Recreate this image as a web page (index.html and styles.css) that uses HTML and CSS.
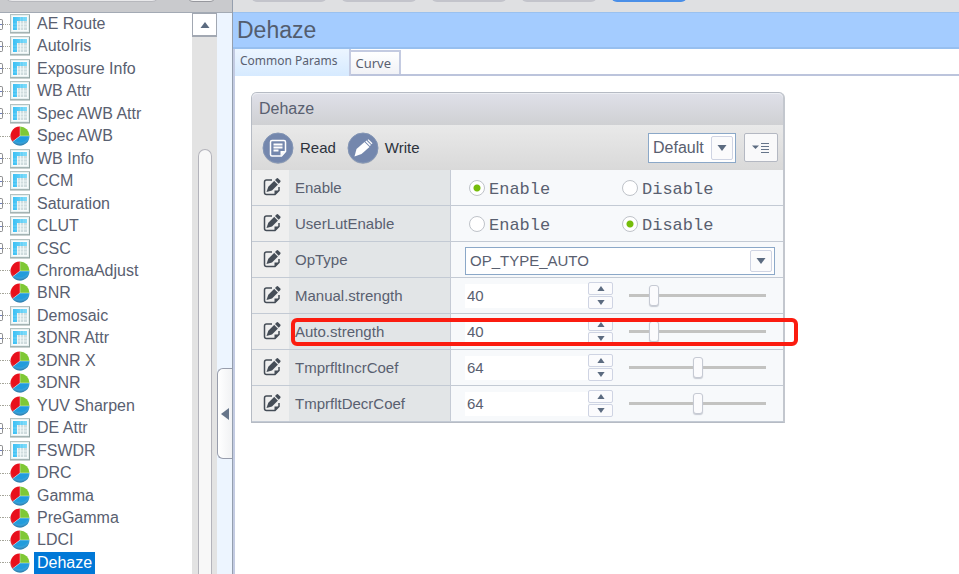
FILE: index.html
```html
<!DOCTYPE html>
<html lang="en">
<head>
<meta charset="utf-8">
<title>Dehaze</title>
<link rel="stylesheet" href="styles.css">
</head>
<body>
<svg class="defs" aria-hidden="true">
  <defs>
    <linearGradient id="blue" x1="0" y1="0" x2="1" y2="0"><stop offset="0" stop-color="#3cc0f4"/><stop offset="1" stop-color="#7fdcfa"/></linearGradient>
    <radialGradient id="shade" cx="0.5" cy="0.35" r="0.65"><stop offset="0.7" stop-color="#fff" stop-opacity="0"/><stop offset="1" stop-color="#223" stop-opacity="0.4"/></radialGradient>
    <symbol id="table" viewBox="0 0 20 20">
      <rect x="0.5" y="0.5" width="19" height="18" fill="#e6efef" stroke="#b3c2c1"/>
      <path d="M0 19h20M19.500 1v18" stroke="#93a5a4"/>
      <rect x="2" y="2" width="16" height="15" fill="#f8fcfc"/>
      <rect x="3" y="3" width="14" height="13" fill="#cfdcde"/>
      <path d="M3 3h14v4H7v9H3z" fill="url(#blue)"/>
      <path d="M7.500 7v9M10.500 7v9M13.500 7v9M7 10h10M7 13h10" stroke="#f4fafa" stroke-width="0.800" fill="none"/>
      <path d="M3 10h4M3 13h4M10.500 3v4M13.500 3v4" stroke="#8ddcf7" stroke-width="0.600"/>
    </symbol>
    <symbol id="pie" viewBox="0 0 20 20">
      <path d="M10 10V.5A9.500 9.500 0 0 0 2.500 15.800z" fill="#e8101c"/>
      <path d="M10 10V.5A9.500 9.500 0 0 1 19.500 10z" fill="#7fc835"/>
      <path d="M10 10h9.500A9.500 9.500 0 0 1 2.500 15.800z" fill="#219cdc"/>
      <path d="M10 .5V10h9.500M10 10l-7.500 5.800" stroke="#fff" stroke-opacity="0.4" fill="none"/>
      <circle cx="10" cy="10" r="9.500" fill="url(#shade)"/>
    </symbol>
    <symbol id="edit" viewBox="0 0 18 18">
      <path d="M9 2H3.500Q1.500 2 1.500 4v10.500q0 2 2 2H12l4-4V9" fill="none" stroke="#454d57" stroke-width="1.500"/>
      <path d="M11.500 17v-4.500H16z" fill="#454d57"/>
      <path d="M3.500 14l1.800-5.200 6-6 3.700 3.700-6 6z" fill="#454d57"/>
      <path d="M12 2l1.800-1.700q.7-.5 1.400.1l2.100 2.200q.6.700 0 1.300L15.700 5.700z" fill="#454d57"/>
      <path d="M11.200 2.400l4.400 4.400" stroke="#efefef" stroke-width="0.800"/>
    </symbol>
    <symbol id="up" viewBox="0 0 10 6"><path d="M5 0l4.500 6h-9z" fill="#5c6b80"/></symbol>
    <symbol id="down" viewBox="0 0 10 6"><path d="M.5 0h9L5 6z" fill="#5c6b80"/></symbol>
  </defs>
</svg>

<div class="app">
  <aside class="sidebar">
    <div class="side-top"><span class="side-field"></span><span class="side-button"></span></div>
    <div class="side-body">
      <ul class="tree">
        <li class="node branch"><svg><use href="#table"/></svg><span>AE Route</span></li>
        <li class="node branch"><svg><use href="#table"/></svg><span>AutoIris</span></li>
        <li class="node branch"><svg><use href="#table"/></svg><span>Exposure Info</span></li>
        <li class="node branch"><svg><use href="#table"/></svg><span>WB Attr</span></li>
        <li class="node branch"><svg><use href="#table"/></svg><span>Spec AWB Attr</span></li>
        <li class="node"><svg><use href="#pie"/></svg><span>Spec AWB</span></li>
        <li class="node branch"><svg><use href="#table"/></svg><span>WB Info</span></li>
        <li class="node branch"><svg><use href="#table"/></svg><span>CCM</span></li>
        <li class="node branch"><svg><use href="#table"/></svg><span>Saturation</span></li>
        <li class="node branch"><svg><use href="#table"/></svg><span>CLUT</span></li>
        <li class="node branch"><svg><use href="#table"/></svg><span>CSC</span></li>
        <li class="node"><svg><use href="#pie"/></svg><span>ChromaAdjust</span></li>
        <li class="node"><svg><use href="#pie"/></svg><span>BNR</span></li>
        <li class="node branch"><svg><use href="#table"/></svg><span>Demosaic</span></li>
        <li class="node branch"><svg><use href="#table"/></svg><span>3DNR Attr</span></li>
        <li class="node"><svg><use href="#pie"/></svg><span>3DNR X</span></li>
        <li class="node"><svg><use href="#pie"/></svg><span>3DNR</span></li>
        <li class="node"><svg><use href="#pie"/></svg><span>YUV Sharpen</span></li>
        <li class="node branch"><svg><use href="#table"/></svg><span>DE Attr</span></li>
        <li class="node branch"><svg><use href="#table"/></svg><span>FSWDR</span></li>
        <li class="node"><svg><use href="#pie"/></svg><span>DRC</span></li>
        <li class="node"><svg><use href="#pie"/></svg><span>Gamma</span></li>
        <li class="node"><svg><use href="#pie"/></svg><span>PreGamma</span></li>
        <li class="node"><svg><use href="#pie"/></svg><span>LDCI</span></li>
        <li class="node"><svg><use href="#pie"/></svg><span class="selected">Dehaze</span></li>
      </ul>
      <div class="scrollbar">
        <button class="scroll-up" aria-label="Scroll up"><svg><use href="#up"/></svg></button>
        <div class="scroll-thumb"></div>
      </div>
      <div class="gutter">
        <button class="collapse" aria-label="Collapse"><svg viewBox="0 0 8 12"><path d="M8 0v12L0 6z" fill="#66758a"/></svg></button>
      </div>
    </div>
  </aside>

  <main class="main">
    <div class="main-top"><span class="pill"></span><span class="pill"></span><span class="pill"></span><span class="pill"></span><span class="pill active"></span></div>
    <h1 class="title">Dehaze</h1>
    <div class="page">
      <nav class="tabs">
        <button class="tab current">Common Params</button>
        <button class="tab">Curve</button>
      </nav>
      <section class="card">
        <h2 class="card-title">Dehaze</h2>
        <div class="toolbar">
          <button class="action"><svg viewBox="0 0 32 32"><circle cx="16" cy="17" r="15" fill="#8f97a5" opacity="0.5"/><circle cx="16" cy="16" r="15" fill="#7487ad" stroke="#8496b5"/><path d="M10 8.500h12q1.500 0 1.500 1.500v9.500L19.500 24H10q-1.500 0-1.500-1.500V10q0-1.500 1.500-1.500z" fill="none" stroke="#fff" stroke-width="1.500"/><path d="M18.500 24v-5h5z" fill="#fff"/><path d="M11.500 12.500h9M11.500 15.500h9M11.500 18.500h5" stroke="#fff" stroke-width="1.800"/></svg>Read</button>
          <button class="action"><svg viewBox="0 0 32 32"><circle cx="16" cy="17" r="15" fill="#8f97a5" opacity="0.5"/><circle cx="16" cy="16" r="15" fill="#7487ad" stroke="#8496b5"/><path d="M7.500 24.500l2-7.500 8-7 5 5-8 7z" fill="#fff"/><path d="M18.300 9.500l1.200-1 4.500 4.500-1.200 1zM20.500 8l1-.8 4 4-1 1z" fill="#fff"/></svg>Write</button>
          <span class="spacer"></span>
          <span class="picker preset"><select aria-label="Preset"><option>Default</option></select><span class="drop"><svg><use href="#down"/></svg></span></span>
          <button class="menu" aria-label="Menu"><svg viewBox="0 0 18 10"><path d="M0 2.500h7L3.500 6z" fill="#5c6b80"/><path d="M9 .5h8M9 3.500h8M9 6.500h8M9 9.500h8" stroke="#66758a"/></svg></button>
        </div>
        <table class="params">
          <tbody>
            <tr>
              <td class="edit"><svg><use href="#edit"/></svg></td><th scope="row">Enable</th>
              <td><div class="radios"><label><input type="radio" name="en" checked><span>Enable</span></label><label><input type="radio" name="en"><span>Disable</span></label></div></td>
            </tr>
            <tr>
              <td class="edit"><svg><use href="#edit"/></svg></td><th scope="row">UserLutEnable</th>
              <td><div class="radios"><label><input type="radio" name="lut"><span>Enable</span></label><label><input type="radio" name="lut" checked><span>Disable</span></label></div></td>
            </tr>
            <tr>
              <td class="edit"><svg><use href="#edit"/></svg></td><th scope="row"><label for="op">OpType</label></th>
              <td><span class="picker wide"><select id="op"><option>OP_TYPE_AUTO</option></select><span class="drop"><svg><use href="#down"/></svg></span></span></td>
            </tr>
            <tr>
              <td class="edit"><svg><use href="#edit"/></svg></td><th scope="row"><label for="manual">Manual.strength</label></th>
              <td><div class="number"><input id="manual" type="text" value="40"><span class="spin"><button aria-label="Increase"><svg><use href="#up"/></svg></button><button aria-label="Decrease"><svg><use href="#down"/></svg></button></span><input type="range" aria-label="Manual.strength" max="255" value="40"></div></td>
            </tr>
            <tr class="marked">
              <td class="edit"><svg><use href="#edit"/></svg></td><th scope="row"><label for="auto">Auto.strength</label></th>
              <td><div class="number"><input id="auto" type="text" value="40"><span class="spin"><button aria-label="Increase"><svg><use href="#up"/></svg></button><button aria-label="Decrease"><svg><use href="#down"/></svg></button></span><input type="range" aria-label="Auto.strength" max="255" value="40"></div><span class="mark"></span></td>
            </tr>
            <tr>
              <td class="edit"><svg><use href="#edit"/></svg></td><th scope="row"><label for="incr">TmprfltIncrCoef</label></th>
              <td><div class="number"><input id="incr" type="text" value="64"><span class="spin"><button aria-label="Increase"><svg><use href="#up"/></svg></button><button aria-label="Decrease"><svg><use href="#down"/></svg></button></span><input type="range" aria-label="TmprfltIncrCoef" max="128" value="64"></div></td>
            </tr>
            <tr>
              <td class="edit"><svg><use href="#edit"/></svg></td><th scope="row"><label for="decr">TmprfltDecrCoef</label></th>
              <td><div class="number"><input id="decr" type="text" value="64"><span class="spin"><button aria-label="Increase"><svg><use href="#up"/></svg></button><button aria-label="Decrease"><svg><use href="#down"/></svg></button></span><input type="range" aria-label="TmprfltDecrCoef" max="128" value="64"></div></td>
            </tr>
          </tbody>
        </table>
      </section>
    </div>
  </main>
</div>
</body>
</html>
```
FILE: styles.css
```css
*, *::before, *::after { box-sizing: border-box; }
body { margin: 0; background: #fff; color: #596070; font: 15px/20px "Liberation Sans", Arial, sans-serif; }
button, input, select { font: inherit; color: inherit; margin: 0; padding: 0; }
svg { display: block; flex: none; }
.defs { position: absolute; width: 0; height: 0; }
.app { display: flex; height: 100vh; overflow: hidden; }

.sidebar { width: 232px; flex: none; display: flex; flex-direction: column; }
.side-top { height: 13px; flex: none; display: flex; align-items: flex-end; padding: 0 16px 10px 4px; justify-content: space-between; background: #c9cacd; border-bottom: 1px solid #a3aab4; overflow: hidden; }
.side-field { flex: none; width: 156px; height: 24px; border: 1px solid #b7b8bd; border-radius: 8px; background: #e9e9eb; }
.side-button { flex: none; width: 29px; height: 24px; border: 1px solid #96979d; border-radius: 6px; background: #f2f2f3; }
.side-body { flex: 1; min-height: 0; display: flex; }

.tree { flex: 1; margin: 0; padding: 0; list-style: none; display: flex; flex-direction: column; justify-content: space-between; overflow: hidden; font-size: 16px; }
.node { display: flex; align-items: center; height: 22px; white-space: nowrap; }
.node svg { width: 20px; height: 20px; }
.node span { line-height: 22px; margin-left: 4px; padding: 0 3px; }
.node::before { content: ""; order: -2; width: 3px; border-top: 1px dotted #a5a59a; }
.node::after { content: ""; order: -1; width: 7px; border-top: 1px dotted #a5a59a; }
.branch::before { height: 11px; border: 1px solid #8f9092; border-left: 0; border-radius: 0 2px 2px 0; background: linear-gradient(#fff 4px, #6f7fc0 4px 5px, #fff 5px); }
.node .selected { background: #0078d7; color: #fff; }

.scrollbar { width: 25px; flex: none; display: flex; flex-direction: column; align-items: center; background: #e3e3e3; }
.scroll-up { width: 25px; height: 24px; flex: none; display: grid; place-items: center; background: #fff; border: 1px solid #a2a8b2; border-bottom-width: 2px; }
.scroll-up svg { width: 10px; height: 6px; }
.scroll-thumb { flex: 1; width: 14px; margin-top: 112px; background: #f8f8f8; border: 1px solid #b3b3bb; border-bottom: 0; border-radius: 7px 7px 0 0; }
.gutter { width: 15px; flex: none; display: flex; flex-direction: column; background: #edf5ff; }
.gutter::before { content: ""; flex: 356; }
.gutter::after { content: ""; flex: 115; }
.collapse { height: 91px; display: grid; place-items: center; background: linear-gradient(90deg, #fff, #f1f2f4); border: 1px solid #989dac; border-right: 0; border-radius: 6px 0 0 6px; }
.collapse svg { width: 8px; height: 12px; }

.main { flex: 1; min-width: 0; display: flex; flex-direction: column; border-left: 1px solid #959fae; }
.main-top { height: 12px; flex: none; display: flex; gap: 14px; align-items: flex-end; padding: 0 18px 10px; background: #dfe0e2; overflow: hidden; }
.pill { flex: none; width: 76px; height: 24px; border-radius: 6px; background: #c3c4cb; }
.pill.active { background: #4a8fe8; }
.title { margin: 0; padding: 0 4px; font-size: 23px; font-weight: 400; line-height: 34px; color: #535d6e; background: #a4ccff; border-top: 1px solid #9ac1ef; border-bottom: 2px solid #97bfef; }
.page { flex: 1; border-left: 2px solid #c3cbe2; }
.tabs { height: 27px; display: flex; align-items: stretch; border-bottom: 2px solid #bcc4dc; font: 13px/20px "Noto Sans", "Open Sans", sans-serif; }
.tab { height: 24px; align-self: flex-end; padding: 0 8px 0 5px; border: 2px solid #c4cbe1; border-left: 0; border-bottom: 0; background: linear-gradient(#fff, #f1f2f6); }
.tab.current { height: 27px; align-self: flex-start; margin-bottom: -2px; padding: 0 11px 3px 5px; border-width: 0 2px 0 0; background: linear-gradient(#ecf5ff, #d6eaff); font-size: 12px; }

.card { max-width: 534px; margin: 16px; background: #dcdde0; border: 1px solid #b6bbc4; border-right: 2px solid #c3c7ce; border-radius: 6px 6px 0 0; }
.card-title { margin: 0; padding: 0 7px; font-size: 16px; font-weight: 400; line-height: 32px; border-radius: 5px 5px 0 0; background: linear-gradient(#dfe0e9, #cfd0d3); box-shadow: inset 0 1px #eceef3; }
.toolbar { display: flex; align-items: center; height: 45px; padding: 0 5px 0 10px; background: linear-gradient(#e9e9e9, #d9d9d9); }
.action { display: flex; align-items: center; gap: 6px; margin-right: 11px; border: 0; background: none; color: #2c323c; }
.action svg { width: 32px; height: 32px; }
.spacer { flex: 1; }
.picker { position: relative; display: flex; height: 30px; }
.picker select { appearance: none; width: 100%; padding: 0 4px; border: 1px solid #8ba8c8; border-radius: 0; background: #fff; outline: 0; }
.drop { position: absolute; right: 3px; top: 3px; bottom: 3px; width: 22px; display: grid; place-items: center; background: #fbfbfc; border: 1px solid #cfd4e3; border-radius: 2px; pointer-events: none; }
.drop svg { width: 10px; height: 6px; }
.preset { width: 88px; font-size: 16px; }
.menu { display: grid; place-items: center; width: 34px; height: 29px; margin-left: 8px; border: 1px solid #b4b8c2; border-radius: 2px; background: #f9f9fa; }
.menu svg { width: 18px; height: 10px; }

.params { width: 100%; border-collapse: separate; border-spacing: 0; table-layout: fixed; }
.params td, .params th { height: 36px; padding: 0; background: #f7f9fb; border-bottom: 1px solid #c3cad4; text-align: left; font-weight: 400; }
.params td.edit { width: 37px; background: #efefef; }
.edit svg { width: 18px; height: 18px; margin: 0 0 2px 11px; }
.params th { width: 162px; padding-left: 6px; background: #e2e5e7; border-right: 1px solid #c5cbd5; }
.radios { display: flex; padding-left: 18px; font: 17px/20px "Liberation Mono", monospace; }
.radios label { display: flex; align-items: center; gap: 4px; width: 153px; }
.radios span { padding-top: 4px; }
.radios input { appearance: none; width: 16px; height: 16px; border: 1px solid #bfc3c9; border-radius: 50%; background: #fff; }
.radios input:checked { background: radial-gradient(circle, #76bd0a 0 3px, #fff 4px); }
.wide { height: 28px; margin: 2px 8px 0 14px; }
.number { display: flex; align-items: center; height: 30px; padding-left: 14px; }
.number input[type="text"] { width: 123px; height: 24px; padding: 0 2px; border: 0; background: #fff; }
.spin { display: flex; flex-direction: column; gap: 1px; width: 25px; }
.spin button { height: 13px; display: grid; place-items: center; border: 1px solid #cfd4e3; border-radius: 2px; background: #fbfbfd; }
.spin svg { width: 8px; height: 5px; }
.number input[type="range"] { appearance: none; width: 137px; height: 24px; margin-left: 16px; background: linear-gradient(#c3c3c1, #c3c3c1) center / 100% 3px no-repeat; }
.number input[type="range"]::-webkit-slider-thumb { appearance: none; width: 10px; height: 21px; border: 1px solid #c6cad3; border-radius: 3px; background: #fbfbfd; box-shadow: 0 1px 1px #c6cad3; }
.marked { position: relative; }
.mark { position: absolute; left: 39px; right: -15px; top: 4px; bottom: 4px; border: 4px solid #fb1c10; border-radius: 6px; pointer-events: none; }
```
